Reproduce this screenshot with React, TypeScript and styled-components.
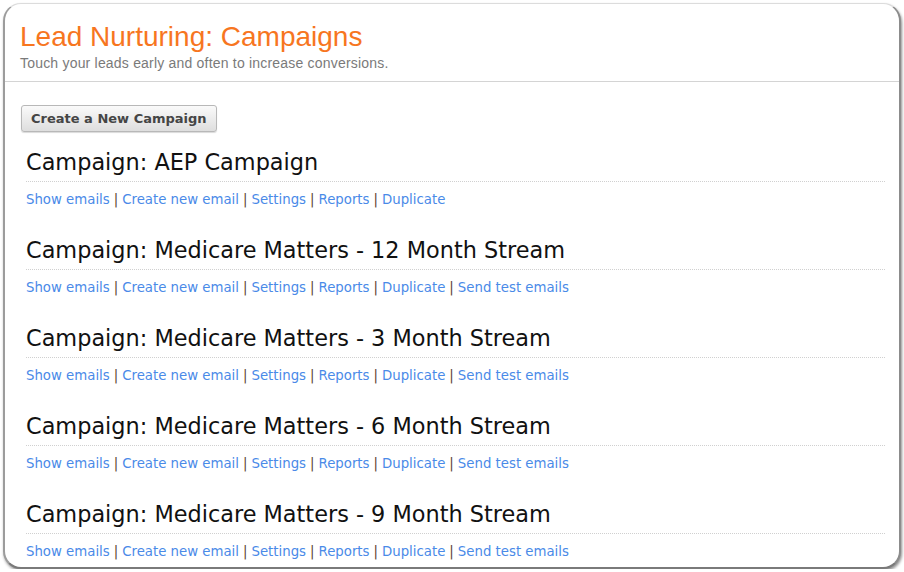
import React from "react";
import styled, { createGlobalStyle } from "styled-components";

const GlobalStyle = createGlobalStyle`
  html, body {
    margin: 0;
    padding: 0;
    background: #ffffff;
  }
  body {
    font-family: "Liberation Sans", Arial, sans-serif;
  }
`;

const Card = styled.div`
  box-sizing: border-box;
  margin: 3px 0 0 3px;
  width: 898px;
  height: 566px;
  background: #fff;
  border-radius: 18px;
  border-top: 1px solid #dcdcdc;
  border-left: 2px solid #9c9c9c;
  border-right: 2px solid #8c8c8c;
  border-bottom: 2px solid #7a7a7a;
  box-shadow: 1px 2px 3px rgba(0, 0, 0, 0.45);
  overflow: hidden;
`;

const Header = styled.header`
  padding: 16px 0 0 15px;
  height: 78px;
  box-sizing: border-box;
  border-bottom: 1px solid #d4d4d4;
`;

const Title = styled.h1`
  margin: 0;
  font-family: "Liberation Sans", Arial, sans-serif;
  font-weight: normal;
  font-size: 28px;
  line-height: 33px;
  color: #f7761f;
`;

const Subtitle = styled.p`
  margin: 2px 0 0;
  font-size: 14px;
  letter-spacing: 0.2px;
  line-height: 16px;
  color: #7a7a7a;
`;

const Body = styled.main`
  padding: 23px 14px 0 16px;
`;

const NewButton = styled.button`
  display: block;
  height: 27px;
  padding: 0 9px;
  margin: 0;
  font-family: "DejaVu Sans", Verdana, sans-serif;
  font-weight: bold;
  font-size: 13px;
  color: #454545;
  background: linear-gradient(#fafafa, #dedede);
  border: 1px solid #b8b8b8;
  border-radius: 3px;
  box-shadow: 0 1px 1px rgba(0, 0, 0, 0.15);
`;

const List = styled.div`
  display: flex;
  flex-direction: column;
  padding-left: 5px;
  margin-top: 15px;
`;

const Campaign = styled.section`
  height: 88px;
`;

const CampaignTitle = styled.h2`
  margin: 0;
  padding-bottom: 4px;
  font-family: "DejaVu Sans", Verdana, sans-serif;
  font-weight: normal;
  font-size: 22.4px;
  line-height: 30px;
  color: #111;
  border-bottom: 1px dotted #d0d0d0;
`;

const Links = styled.div`
  margin-top: 9px;
  font-family: "DejaVu Sans", Verdana, sans-serif;
  font-size: 13.3px;
  line-height: 18px;
  color: #5c4331;
`;

const Link = styled.a`
  color: #4a8ae8;
  text-decoration: none;
  cursor: pointer;
`;

const Sep = styled.span`
  margin: 0 4px;
`;

const campaigns = [
  { name: "Campaign: AEP Campaign", test: false },
  { name: "Campaign: Medicare Matters - 12 Month Stream", test: true },
  { name: "Campaign: Medicare Matters - 3 Month Stream", test: true },
  { name: "Campaign: Medicare Matters - 6 Month Stream", test: true },
  { name: "Campaign: Medicare Matters - 9 Month Stream", test: true },
];

export default function App() {
  return (
    <>
      <GlobalStyle />
      <Card>
        <Header>
          <Title>Lead Nurturing: Campaigns</Title>
          <Subtitle>Touch your leads early and often to increase conversions.</Subtitle>
        </Header>
        <Body>
          <NewButton>Create a New Campaign</NewButton>
          <List>
            {campaigns.map((c) => {
              const links = ["Show emails", "Create new email", "Settings", "Reports", "Duplicate"];
              if (c.test) links.push("Send test emails");
              return (
                <Campaign key={c.name}>
                  <CampaignTitle>{c.name}</CampaignTitle>
                  <Links>
                    {links.map((l, i) => (
                      <React.Fragment key={l}>
                        {i > 0 && <Sep>|</Sep>}
                        <Link>{l}</Link>
                      </React.Fragment>
                    ))}
                  </Links>
                </Campaign>
              );
            })}
          </List>
        </Body>
      </Card>
    </>
  );
}
